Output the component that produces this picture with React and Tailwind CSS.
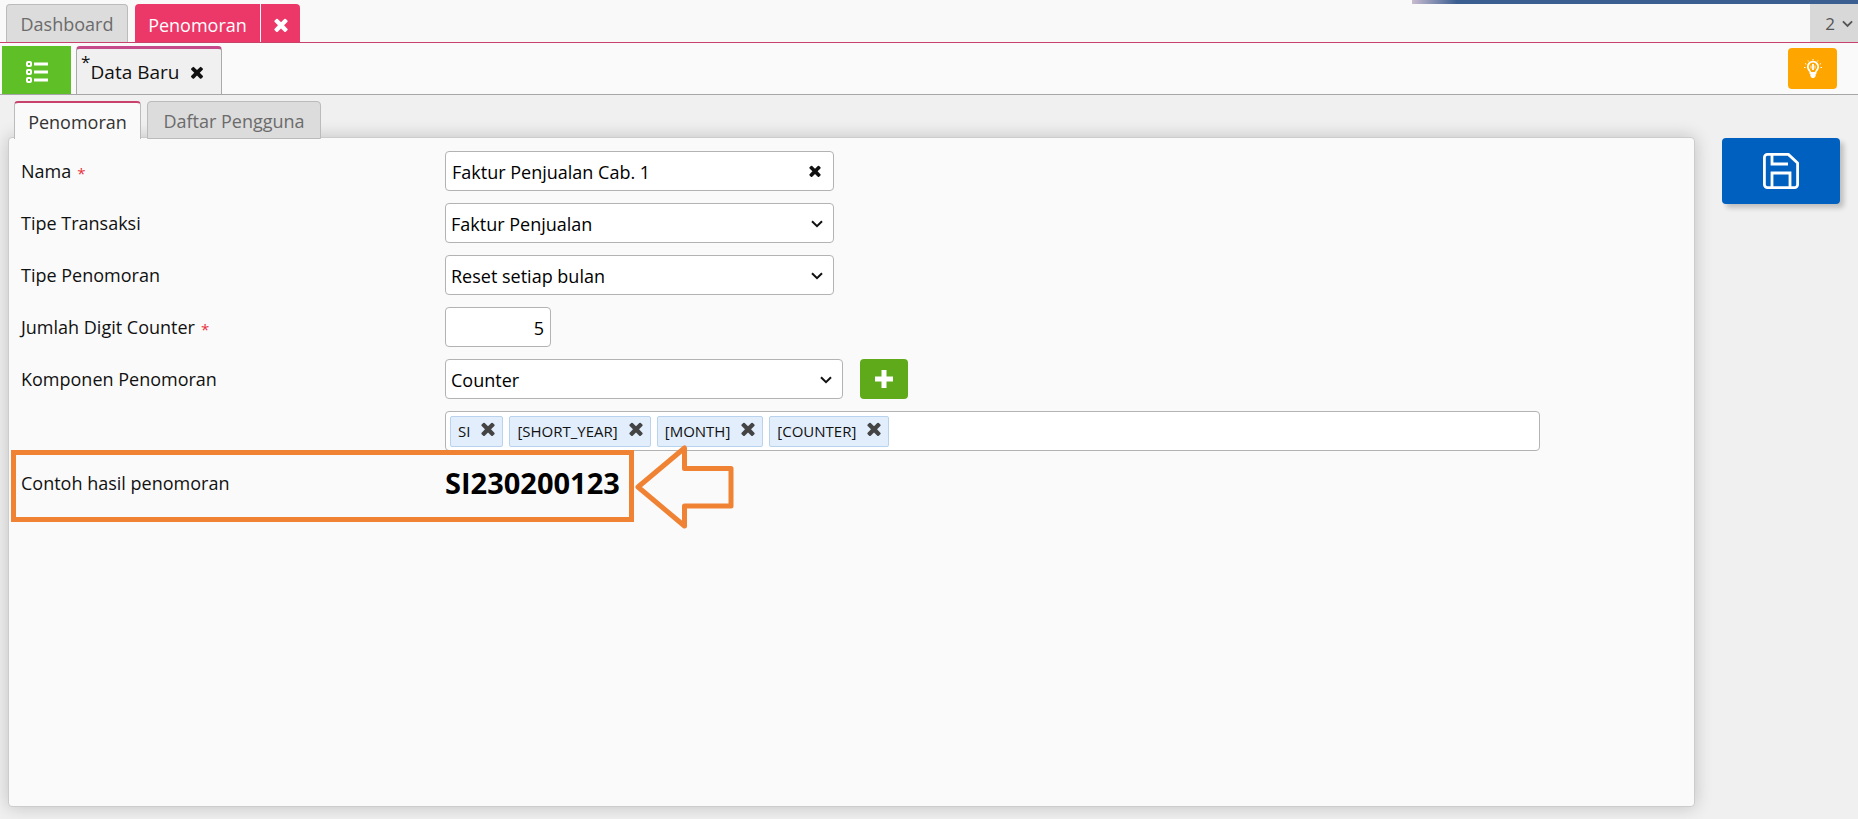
import React, { useState } from "react";

const CrossIcon = ({ className }) => (
  <svg viewBox="300 300 1190 1254" className={className} fill="currentColor" aria-hidden="true">
    <path d="M1490 1322q0 40-28 68l-136 136q-28 28-68 28t-68-28l-294-294-294 294q-28 28-68 28t-68-28l-136-136q-28-28-28-68t28-68l294-294-294-294q-28-28-28-68t28-68l136-136q28-28 68-28t68 28l294 294 294-294q28-28 68-28t68 28l136 136q28 28 28 68t-28 68l-294 294 294 294q28 28 28 68z" />
  </svg>
);

const ChevronIcon = ({ className }) => (
  <svg viewBox="0 0 12 8" className={className} fill="none" stroke="currentColor" strokeWidth="2" aria-hidden="true">
    <path d="M1 1.2l5 5 5-5" />
  </svg>
);

const ListIcon = () => (
  <svg viewBox="0 0 22 22" className="w-[22px] h-[22px]" fill="none" stroke="currentColor" aria-hidden="true">
    <rect x="1" y="1" width="4" height="4" rx="1" strokeWidth="2" />
    <rect x="1" y="9" width="4" height="4" rx="1" strokeWidth="2" />
    <rect x="1" y="17" width="4" height="4" rx="1" strokeWidth="2" />
    <path d="M8 3H22M8 11H22M8 19H22" strokeWidth="3" />
  </svg>
);

const BulbIcon = () => (
  <svg viewBox="0 0 18 20" className="w-[18px] h-5" fill="none" stroke="currentColor" aria-hidden="true">
    <path d="M6.5 14c0-2.200-2.700-3-2.700-6.200a5.200 5.200 0 0 1 10.400 0c0 3.200-2.700 4-2.700 6.200z" strokeWidth="1.800" />
    <path d="M6.300 14.500h5.400v2.500l-1.500 2H7.800l-1.500-2z" fill="currentColor" stroke="none" />
    <path d="M9 5v6" strokeWidth="1.800" />
    <path d="M7 6.500v3M11 6.500v3" strokeWidth="0.800" />
    <path d="M9 0v1.300M4 1.500l.8 1M14 1.500l-.8 1M1 4.500l1.200.6M17 4.500l-1.200.6M0 8.500h1.500M18 8.500h-1.500" strokeWidth="1" />
  </svg>
);

const SaveIcon = () => (
  <svg viewBox="0 0 36 36" className="w-9 h-9" fill="none" stroke="currentColor" strokeWidth="2.800" strokeLinejoin="round" aria-hidden="true">
    <path d="M4.500 1.400h20.800L34.600 10v21.500a3.100 3.100 0 0 1-3.100 3.100h-27a3.100 3.100 0 0 1-3.100-3.100v-27a3.100 3.100 0 0 1 3.100-3.100z" />
    <path d="M9 1.500v9.500h16M9 34.500V20h18v14.500" strokeLinejoin="miter" />
  </svg>
);

const fieldClass =
  "h-10 rounded border border-[#b3b3b3] bg-white pt-[2px] text-[18px] text-black outline-none";

const Row = ({ id, label, required, children }) => (
  <div className="flex items-center h-10">
    <label htmlFor={id} className="flex items-center w-[424px] shrink-0 text-[18px]">
      {label}
      {required && <span className="ml-[6px] pt-1 text-[15px] text-[#e8303a]">*</span>}
    </label>
    {children}
  </div>
);

const SelectField = ({ id, className, options }) => (
  <div className={`relative ${className}`}>
    <select id={id} className={`${fieldClass} w-full appearance-none pl-[5px] pr-8`}>
      {options.map((option) => (
        <option key={option}>{option}</option>
      ))}
    </select>
    <ChevronIcon className="absolute right-[11px] top-[17px] w-3 h-2 pointer-events-none" />
  </div>
);

const App = () => {
  const [name, setName] = useState("Faktur Penjualan Cab. 1");
  const [digits, setDigits] = useState("5");
  const [tags, setTags] = useState(["SI", "[SHORT_YEAR]", "[MONTH]", "[COUNTER]"]);

  return (
    <div className="min-h-screen flex flex-col bg-[#f0f0f0] font-['Open_Sans','Noto_Sans',sans-serif] text-[#111]">
      {/* Module tabs */}
      <header className="relative flex items-end justify-between h-[43px] border-b border-[#c9426b] bg-[#f9f9f9]">
        <div className="absolute top-0 right-0 w-[446px] h-1 bg-linear-to-r from-[#c9bccf] to-[#3c5f91] to-10%" />
        <nav className="flex pl-[6px] gap-[7px] text-[18px]">
          <button className="w-[122px] h-[38px] pt-[2px] rounded-t border border-b-0 border-[#bbb] bg-[#dcdcdc] text-[#6b6b6b]">
            Dashboard
          </button>
          <div className="flex gap-px h-[38px] rounded-t overflow-hidden text-white">
            <button className="w-[125px] pt-1 bg-[#ec3868]">Penomoran</button>
            <button aria-label="Tutup Penomoran" className="flex items-center justify-center w-[39px] pt-1 bg-[#ec3868]">
              <CrossIcon className="w-[14px] h-[14px]" />
            </button>
          </div>
        </nav>
        <button className="flex items-center justify-end gap-[7px] w-12 h-[38px] pr-[5px] pt-[2px] bg-[#d8d8d8] text-[17px] text-[#555]">
          2
          <ChevronIcon className="w-[11px] h-2" />
        </button>
      </header>

      {/* Document tabs */}
      <div className="flex items-end h-[52px] pl-[2px] pr-[21px] border-b border-[#a6a6a6] bg-[#fafafa]">
        <button aria-label="Daftar" className="flex items-center justify-center w-[69px] h-12 pt-[3px] bg-[#5fbf26] text-white">
          <ListIcon />
        </button>
        <div className="relative flex items-center justify-center gap-3 w-[146px] h-12 pt-[2px] pr-1 ml-[5px] rounded-t border border-b-0 border-t-3 border-[#aaa] border-t-[#c44a8a] bg-[#f0f0f0]">
          <span className="absolute left-1 top-0 text-[17px]">*</span>
          <button className="text-[19px]">Data Baru</button>
          <button aria-label="Tutup Data Baru">
            <CrossIcon className="w-3 h-[13px]" />
          </button>
        </div>
        <button aria-label="Bantuan" className="flex items-center justify-center w-[49px] h-[41px] mb-[5px] ml-auto rounded bg-[#ffa500] text-white">
          <BulbIcon />
        </button>
      </div>

      <div className="flex flex-1 pl-2 pb-3 pt-[6px]">
        <main className="flex flex-col flex-1 min-w-0">
          <nav className="relative z-10 flex items-end gap-[6px] pl-[6px] -mb-[2px] text-[18px]">
            <button className="w-[127px] h-[38px] pt-[3px] rounded-t border border-b-0 border-t-2 border-[#bbb] border-t-[#c9426b] bg-[#fafafa] text-[#333]">
              Penomoran
            </button>
            <button className="w-[174px] h-[38px] pt-[2px] rounded-t border border-[#bbb] bg-[#dcdcdc] text-[#6b6b6b]">
              Daftar Pengguna
            </button>
          </nav>

          <form className="flex flex-col flex-1 gap-3 pt-[13px] pl-3 rounded border border-[#ccc] bg-[#fafafa] shadow-[0_0_18px_rgba(0,0,0,0.2)]">
            <Row id="nama" label="Nama" required>
              <div className="relative w-[389px]">
                <input
                  id="nama"
                  value={name}
                  onChange={(e) => setName(e.target.value)}
                  className={`${fieldClass} w-full pl-[6px] pr-8`}
                />
                <button
                  type="button"
                  aria-label="Hapus nama"
                  onClick={() => setName("")}
                  className="absolute right-[13px] top-[14px]"
                >
                  <CrossIcon className="w-3 h-3" />
                </button>
              </div>
            </Row>
            <Row id="tipe-transaksi" label="Tipe Transaksi">
              <SelectField id="tipe-transaksi" className="w-[389px]" options={["Faktur Penjualan"]} />
            </Row>
            <Row id="tipe-penomoran" label="Tipe Penomoran">
              <SelectField id="tipe-penomoran" className="w-[389px]" options={["Reset setiap bulan"]} />
            </Row>
            <Row id="digit" label="Jumlah Digit Counter" required>
              <input
                id="digit"
                value={digits}
                onChange={(e) => setDigits(e.target.value)}
                className={`${fieldClass} w-[106px] px-[6px] text-right`}
              />
            </Row>
            <Row id="komponen" label="Komponen Penomoran">
              <SelectField id="komponen" className="w-[398px]" options={["Counter"]} />
              <button
                type="button"
                aria-label="Tambah komponen"
                className="flex items-center justify-center w-12 h-10 ml-[17px] rounded bg-[#5faa1a] text-white"
              >
                <svg viewBox="0 0 18 18" className="w-[18px] h-[18px]" fill="currentColor" aria-hidden="true">
                  <path d="M6.500 0h5v6.500H18v5h-6.500V18h-5v-6.500H0v-5h6.500z" />
                </svg>
              </button>
            </Row>

            <div className="flex items-center gap-[6px] h-10 ml-[424px] mr-[154px] pl-1 rounded border border-[#b3b3b3] bg-white">
              {tags.map((tag) => (
                <span
                  key={tag}
                  className="flex items-center gap-[11px] h-[31px] px-[7px] rounded-xs border border-[#b9d3ee] bg-[#e2eefc] text-[15px]"
                >
                  {tag}
                  <button
                    type="button"
                    aria-label={`Hapus ${tag}`}
                    onClick={() => setTags(tags.filter((t) => t !== tag))}
                    className="mb-1 text-[#444]"
                  >
                    <CrossIcon className="w-[14px] h-[14px]" />
                  </button>
                </span>
              ))}
            </div>

            <div className="relative flex items-center h-10">
              <span className="w-[424px] shrink-0 text-[18px]">Contoh hasil penomoran</span>
              <output className="text-[29px] leading-10 font-bold text-black">SI230200123</output>

              {/* Highlight around the result */}
              <div className="absolute -left-[10px] -top-[13px] w-[623px] h-[72px] border-5 border-[#f08234] pointer-events-none" />
              <svg
                viewBox="0 0 99 84"
                className="absolute left-[614px] -top-[18px] w-[99px] h-[84px] pointer-events-none"
                fill="none"
                stroke="#f08234"
                strokeWidth="5"
                strokeLinejoin="round"
                aria-hidden="true"
              >
                <path d="M3 42L49.500 3v20.500H96v37.500H49.500V81z" />
              </svg>
            </div>
          </form>
        </main>

        <aside className="w-[163px] pt-[37px] pl-[27px] pr-[18px]">
          <button
            aria-label="Simpan"
            className="flex items-center justify-center w-full h-[66px] rounded bg-[#0060c0] text-white shadow-[4px_4px_5px_rgba(0,0,0,0.2)]"
          >
            <SaveIcon />
          </button>
        </aside>
      </div>
    </div>
  );
};

export default App;
